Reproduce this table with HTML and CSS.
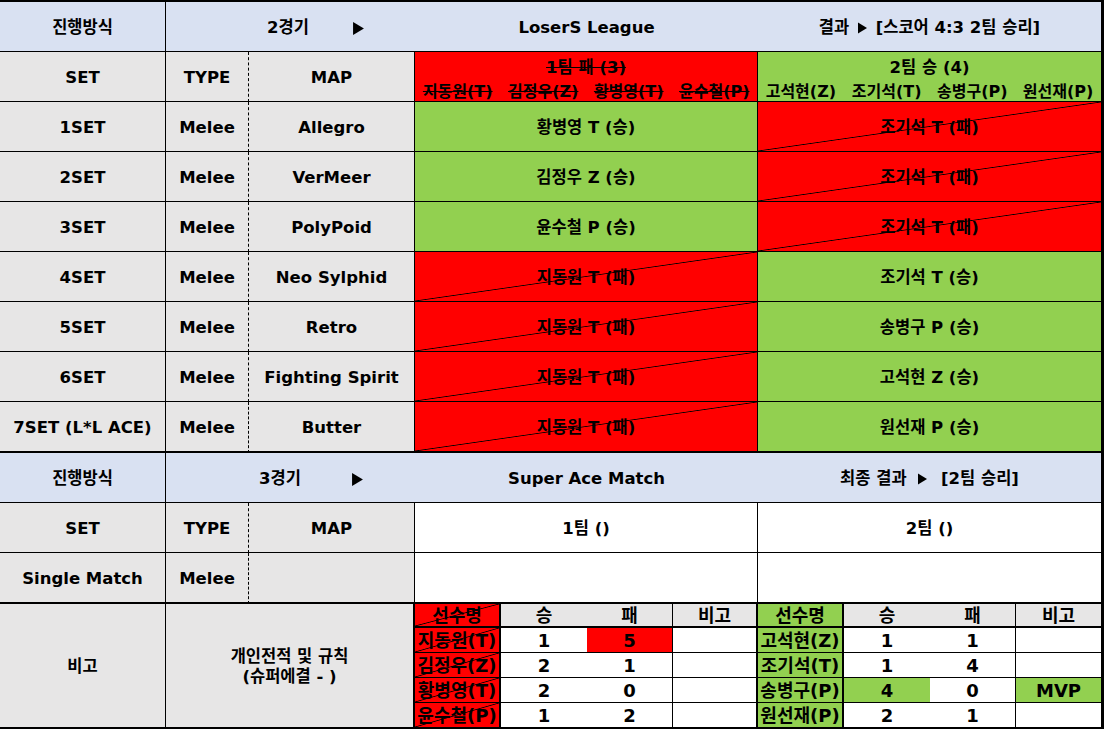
FILE: index.html
```html
<!DOCTYPE html>
<html lang="ko">
<head>
  <meta charset="UTF-8" />
  <meta name="viewport" content="width=device-width, initial-scale=1.0" />
  <title>LoserS League 결과</title>
  <link rel="stylesheet" href="styles.css">
</head>
<body>

<div class="sheet">

  <!-- 2경기 header -->
  <div class="c lav">진행방식</div>
  <div class="c lav span2 nr round r2"><span>2경기</span><svg class="tri" viewBox="0 0 10 12"><polygon points="0,0 10,6 0,12"/></svg></div>
  <div class="c lav span4 nr">LoserS League</div>
  <div class="c lav span4"><span>결과 <svg class="tri sm" viewBox="0 0 10 12"><polygon points="0,0 10,6 0,12"/></svg> [스코어 4:3 2팀 승리]</span></div>

  <div class="c gray">SET</div>
  <div class="c gray dot">TYPE</div>
  <div class="c gray">MAP</div>
  <div class="c red span4 team lost">
    <div>1팀 패 (3)</div>
    <div class="names"><span>지동원(T)</span><span>김정우(Z)</span><span>황병영(T)</span><span>윤수철(P)</span></div>
  </div>
  <div class="c green span4 team">
    <div>2팀 승 (4)</div>
    <div class="names"><span>고석현(Z)</span><span>조기석(T)</span><span>송병구(P)</span><span>원선재(P)</span></div>
  </div>

  <div class="c gray">1SET</div>
  <div class="c gray dot">Melee</div>
  <div class="c gray">Allegro</div>
  <div class="c green span4">황병영 T (승)</div>
  <div class="c red x span4">조기석 T (패)</div>

  <div class="c gray">2SET</div>
  <div class="c gray dot">Melee</div>
  <div class="c gray">VerMeer</div>
  <div class="c green span4">김정우 Z (승)</div>
  <div class="c red x span4">조기석 T (패)</div>

  <div class="c gray">3SET</div>
  <div class="c gray dot">Melee</div>
  <div class="c gray">PolyPoid</div>
  <div class="c green span4">윤수철 P (승)</div>
  <div class="c red x span4">조기석 T (패)</div>

  <div class="c gray">4SET</div>
  <div class="c gray dot">Melee</div>
  <div class="c gray">Neo Sylphid</div>
  <div class="c red x span4">지동원 T (패)</div>
  <div class="c green span4">조기석 T (승)</div>

  <div class="c gray">5SET</div>
  <div class="c gray dot">Melee</div>
  <div class="c gray">Retro</div>
  <div class="c red x span4">지동원 T (패)</div>
  <div class="c green span4">송병구 P (승)</div>

  <div class="c gray">6SET</div>
  <div class="c gray dot">Melee</div>
  <div class="c gray">Fighting Spirit</div>
  <div class="c red x span4">지동원 T (패)</div>
  <div class="c green span4">고석현 Z (승)</div>

  <div class="c gray tb">7SET (L*L ACE)</div>
  <div class="c gray dot tb">Melee</div>
  <div class="c gray tb">Butter</div>
  <div class="c red x span4 tb">지동원 T (패)</div>
  <div class="c green span4 tb">원선재 P (승)</div>

  <!-- 3경기 header -->
  <div class="c lav">진행방식</div>
  <div class="c lav span2 nr round r3"><span>3경기</span><svg class="tri" viewBox="0 0 10 12"><polygon points="0,0 10,6 0,12"/></svg></div>
  <div class="c lav span4 nr">Super Ace Match</div>
  <div class="c lav span4"><span>최종 결과 <svg class="tri sm wide" viewBox="0 0 10 12"><polygon points="0,0 10,6 0,12"/></svg> [2팀 승리]</span></div>

  <div class="c gray">SET</div>
  <div class="c gray dot">TYPE</div>
  <div class="c gray">MAP</div>
  <div class="c white span4">1팀 ()</div>
  <div class="c white span4">2팀 ()</div>

  <div class="c gray tb">Single Match</div>
  <div class="c gray dot tb">Melee</div>
  <div class="c gray tb"></div>
  <div class="c white span4 tb"></div>
  <div class="c white span4 tb"></div>

  <!-- 개인전적 -->
  <div class="c gray rows5 tb">비고</div>
  <div class="c gray span2 rows5 tb r2px">
    <div class="rule">개인전적 및 규칙<br>(슈퍼에결 - )</div>
  </div>

  <div class="c bt red x r2px tb">선수명</div>
  <div class="c bt gray nr tb">승</div>
  <div class="c bt gray tb">패</div>
  <div class="c bt gray r2px tb">비고</div>
  <div class="c bt green r2px tb">선수명</div>
  <div class="c bt gray nr tb">승</div>
  <div class="c bt gray tb">패</div>
  <div class="c bt gray tb">비고</div>

  <div class="c bt red x r2px">지동원(T)</div>
  <div class="c bt white nr">1</div>
  <div class="c bt red">5</div>
  <div class="c bt white r2px"></div>
  <div class="c bt green r2px">고석현(Z)</div>
  <div class="c bt white nr">1</div>
  <div class="c bt white">1</div>
  <div class="c bt white"></div>

  <div class="c bt red x r2px">김정우(Z)</div>
  <div class="c bt white nr">2</div>
  <div class="c bt white">1</div>
  <div class="c bt white r2px"></div>
  <div class="c bt green r2px">조기석(T)</div>
  <div class="c bt white nr">1</div>
  <div class="c bt white">4</div>
  <div class="c bt white"></div>

  <div class="c bt red x r2px">황병영(T)</div>
  <div class="c bt white nr">2</div>
  <div class="c bt white">0</div>
  <div class="c bt white r2px"></div>
  <div class="c bt green r2px">송병구(P)</div>
  <div class="c bt green nr">4</div>
  <div class="c bt white">0</div>
  <div class="c bt green">MVP</div>

  <div class="c bt red x r2px tb">윤수철(P)</div>
  <div class="c bt white nr tb">1</div>
  <div class="c bt white tb">2</div>
  <div class="c bt white r2px tb"></div>
  <div class="c bt green r2px tb">원선재(P)</div>
  <div class="c bt white nr tb">2</div>
  <div class="c bt white tb">1</div>
  <div class="c bt white tb"></div>

</div>

</body>
</html>
```

FILE: styles.css
```css
body {
  margin: 0;
  background: #ffffff;
  font-family: "DejaVu Sans", "Noto Sans CJK KR", sans-serif;
  font-weight: bold;
  font-size: 16.5px;
  color: #000;
}

.sheet {
  display: grid;
  grid-template-columns: 166px 83px 166px 86px 86px 86px 85px 86px 86px 86px 86px;
  grid-template-rows: repeat(8, 50px) 51px 50px 50px 51px 24px 25px 25px 25px 26px;
  width: max-content;
  border-top: 2px solid #000;
  border-right: 2px solid #000;
}

.c {
  box-sizing: border-box;
  display: flex;
  align-items: center;
  justify-content: center;
  padding-top: 3px;
  border-right: 1px solid #000;
  border-bottom: 1px solid #000;
  line-height: 1;
  white-space: nowrap;
  text-align: center;
}

/* fills */
.lav { background: #d9e1f2; }
.gray { background: #e7e6e6; }
.red { background-color: #ff0000; }
.green { background: #92d050; }
.white { background: #ffffff; }

/* lost cell: corner to corner line */
.x {
  background-image: linear-gradient(to bottom right, transparent calc(50% - 0.8px), #000 50%, transparent calc(50% + 0.8px));
}

/* borders */
.nr { border-right: none; }
.dot { border-right: 1px dashed #000; }
.tb { border-bottom-width: 2px; }
.r2px { border-right-width: 2px; }

/* spans */
.span2 { grid-column: span 2; }
.span4 { grid-column: span 4; }
.rows5 { grid-row: span 5; }

/* "2경기  ▶" cells */
.round { justify-content: flex-start; }
.round.r2 { padding-left: 101px; gap: 44px; }
.round.r3 { padding-left: 93px; gap: 51px; }

.tri {
  width: 11px;
  height: 13px;
  fill: #000;
}

.tri.sm {
  width: 9px;
  height: 12px;
  vertical-align: -1px;
  margin: 0 3px;
}

.tri.wide { margin: 0 8px 0 6px; }

/* team header */
.team {
  flex-direction: column;
  gap: 8px;
  padding-top: 7px;
}

.team > div { width: 100%; }

.team .names {
  display: grid;
  grid-template-columns: repeat(4, 1fr);
  font-size: 16px;
}

.team.lost { text-decoration: line-through; }

/* bottom score table */
.bt {
  font-size: 18px;
  padding-top: 1px;
}

.rule { line-height: 20px; }
```
